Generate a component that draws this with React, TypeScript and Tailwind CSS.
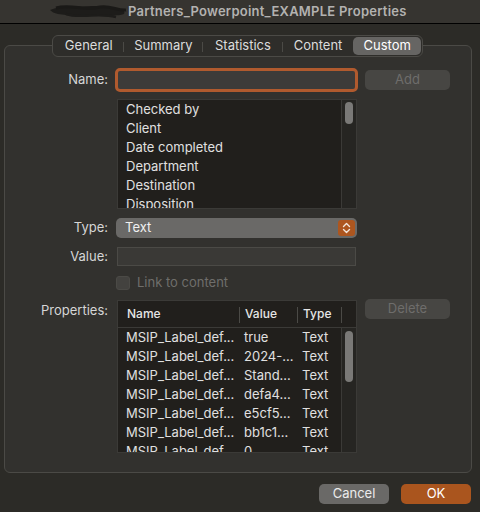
import React from "react";

const listItems = ["Checked by", "Client", "Date completed", "Department", "Destination", "Disposition"];
const props = [
  ["MSIP_Label_def...", "true", "Text"],
  ["MSIP_Label_def...", "2024-...", "Text"],
  ["MSIP_Label_def...", "Stand...", "Text"],
  ["MSIP_Label_def...", "defa4...", "Text"],
  ["MSIP_Label_def...", "e5cf5...", "Text"],
  ["MSIP_Label_def...", "bb1c1...", "Text"],
  ["MSIP_Label_def...", "0", "Text"],
];
const tabs = ["General", "Summary", "Statistics", "Content", "Custom"];

function Scribble() {
  return (
    <svg width="84" height="20" viewBox="0 0 84 20" className="shrink-0">
      <path d="M4 8 C14 4 26 3 36 5 C46 3 60 4 70 6 C76 7 80 9 78 12 C70 15 56 12 46 14 C34 16 22 13 12 12 C8 11 6 10 4 8 Z" fill="#1d1c1a" />
      <path d="M10 6 C24 2 40 9 54 5 C64 3 72 9 80 8" stroke="#1a1917" strokeWidth="3" fill="none" />
      <path d="M20 12 C34 17 52 10 70 15" stroke="#1d1c1a" strokeWidth="2.5" fill="none" />
    </svg>
  );
}

export default function App() {
  return (
    <div className="w-[480px] h-[512px] bg-[#2c2b27] flex flex-col text-[13px] text-[#dcdcdc]" style={{ fontFamily: "Inter, 'Noto Sans', sans-serif" }}>
      <div className="h-[24px] shrink-0 bg-[#363430] border-b border-black flex items-center pl-[46px]">
        <Scribble />
        <span className="-ml-[2px] font-semibold text-[13px] text-[#b3b2b0] tracking-[0.25px]">Partners_Powerpoint_EXAMPLE Properties</span>
      </div>

      <div className="relative ml-[4px] mt-[21px] w-[468px] h-[428px] shrink-0 rounded-[6px] border border-[#4b4a46] bg-[#32312e] flex flex-col">
        <div className="absolute -top-[11px] left-[47px] w-[371px] h-[22px] rounded-[6px] border border-[#4b4a46] bg-[#2e2d2a] flex items-center p-[1px]">
          {tabs.map((t, i) => {
            const sel = t === "Custom";
            const widths = ["w-[70px]", "w-[80px]", "w-[80px]", "w-[71px]", "w-[68px]"];
            return (
              <div key={t} className={`${widths[i]} h-full flex items-center justify-center relative ${sel ? "bg-[#666563] rounded-[5px] text-white" : "text-[#dcdcdc]"}`}>
                {t}
                {i < 3 && <span className="absolute right-0 top-[5px] h-[10px] w-px bg-[#4b4a46]" />}
              </div>
            );
          })}
        </div>

        <div className="flex items-center mt-[22px] h-[24px]">
          <div className="w-[103px] text-right text-[#d6d6d6]">Name:</div>
          <div className="ml-[7px] w-[243px] h-[24px] rounded-[5px] border-[3px] border-[#b05a2e] bg-[#3c3b39]" />
          <div className="ml-[7px] w-[85px] h-[20px] rounded-[5px] bg-[#474643] text-[#6e6d6b] flex items-center justify-center">Add</div>
        </div>

        <div className="ml-[112px] mt-[7px] w-[240px] h-[110px] border border-[#3b3a37] bg-[#211f1c] flex overflow-hidden">
          <div className="flex-1 flex flex-col">
            {listItems.map((it) => (
              <div key={it} className="h-[19px] leading-[19px] pl-[8px] shrink-0 text-[#e0e0e0]">{it}</div>
            ))}
          </div>
          <div className="w-[15px] border-l border-[#3b3a37] bg-[#262522] pt-[2px] flex justify-center">
            <div className="w-[8px] h-[22px] rounded-full bg-[#7a7977]" />
          </div>
        </div>

        <div className="flex items-center mt-[9px] h-[20px]">
          <div className="w-[103px] text-right text-[#d6d6d6]">Type:</div>
          <div className="ml-[8px] w-[241px] h-[20px] rounded-[5px] bg-[#6a6967] flex items-center pl-[9px] pr-[2px]">
            <span className="flex-1 text-[#f0f0f0]">Text</span>
            <div className="w-[17px] h-[16px] rounded-[3px] bg-[#ad561f] flex items-center justify-center">
              <svg width="9" height="12" viewBox="0 0 9 12" fill="none" stroke="#f3e6dc" strokeWidth="1.4" strokeLinecap="round" strokeLinejoin="round">
                <path d="M1.5 4.5 L4.5 1.5 L7.5 4.5" />
                <path d="M1.5 7.5 L4.5 10.5 L7.5 7.5" />
              </svg>
            </div>
          </div>
        </div>

        <div className="flex items-center mt-[9px] h-[19px]">
          <div className="w-[103px] text-right text-[#d6d6d6]">Value:</div>
          <div className="ml-[9px] w-[239px] h-[19px] border border-[#4b4a46] bg-[#3a3936]" />
        </div>

        <div className="flex items-center mt-[10px] h-[14px] ml-[111px]">
          <div className="w-[14px] h-[14px] rounded-[3px] bg-[#43423f] border border-[#4b4a46]" />
          <span className="ml-[7px] text-[#6f6e6b]">Link to content</span>
        </div>

        <div className="flex items-start mt-[10px]">
          <div className="w-[103px] text-right text-[#d6d6d6] mt-[1px]">Properties:</div>
          <div className="ml-[9px] w-[240px] h-[153px] border border-[#3b3a37] bg-[#211f1c] flex flex-col overflow-hidden">
            <div className="h-[27px] shrink-0 border-b border-[#3b3a37] flex items-center text-[12px] text-[#e6e6e6] font-medium">
              <div className="w-[122px] pl-[9px] h-full flex items-center relative">Name<span className="absolute right-0 top-[6px] h-[16px] w-px bg-[#4b4a46]" /></div>
              <div className="w-[58px] pl-[5px] h-full flex items-center relative">Value<span className="absolute right-0 top-[6px] h-[16px] w-px bg-[#4b4a46]" /></div>
              <div className="w-[44px] pl-[5px] h-full flex items-center relative">Type<span className="absolute right-0 top-[6px] h-[16px] w-px bg-[#4b4a46]" /></div>
            </div>
            <div className="flex flex-1 min-h-0">
              <div className="flex-1 flex flex-col overflow-hidden">
                {props.map((r, i) => (
                  <div key={i} className="h-[19px] leading-[19px] shrink-0 flex text-[#e0e0e0]">
                    <span className="w-[126px] pl-[8px] whitespace-nowrap">{r[0]}</span>
                    <span className="w-[58px] whitespace-nowrap">{r[1]}</span>
                    <span className="whitespace-nowrap">{r[2]}</span>
                  </div>
                ))}
              </div>
              <div className="w-[15px] border-l border-[#3b3a37] bg-[#262522] pt-[3px] flex justify-center">
                <div className="w-[8px] h-[51px] rounded-full bg-[#7a7977]" />
              </div>
            </div>
          </div>
          <div className="ml-[8px] -mt-[1px] w-[85px] h-[20px] rounded-[5px] bg-[#474643] text-[#6e6d6b] flex items-center justify-center">Delete</div>
        </div>
      </div>

      <div className="flex justify-end gap-[12px] mt-[11px] pr-[9px]">
        <div className="w-[70px] h-[20px] rounded-[5px] bg-[#6a6967] text-[#ececec] flex items-center justify-center">Cancel</div>
        <div className="w-[70px] h-[20px] rounded-[5px] bg-[#aa551e] text-white flex items-center justify-center">OK</div>
      </div>
    </div>
  );
}
